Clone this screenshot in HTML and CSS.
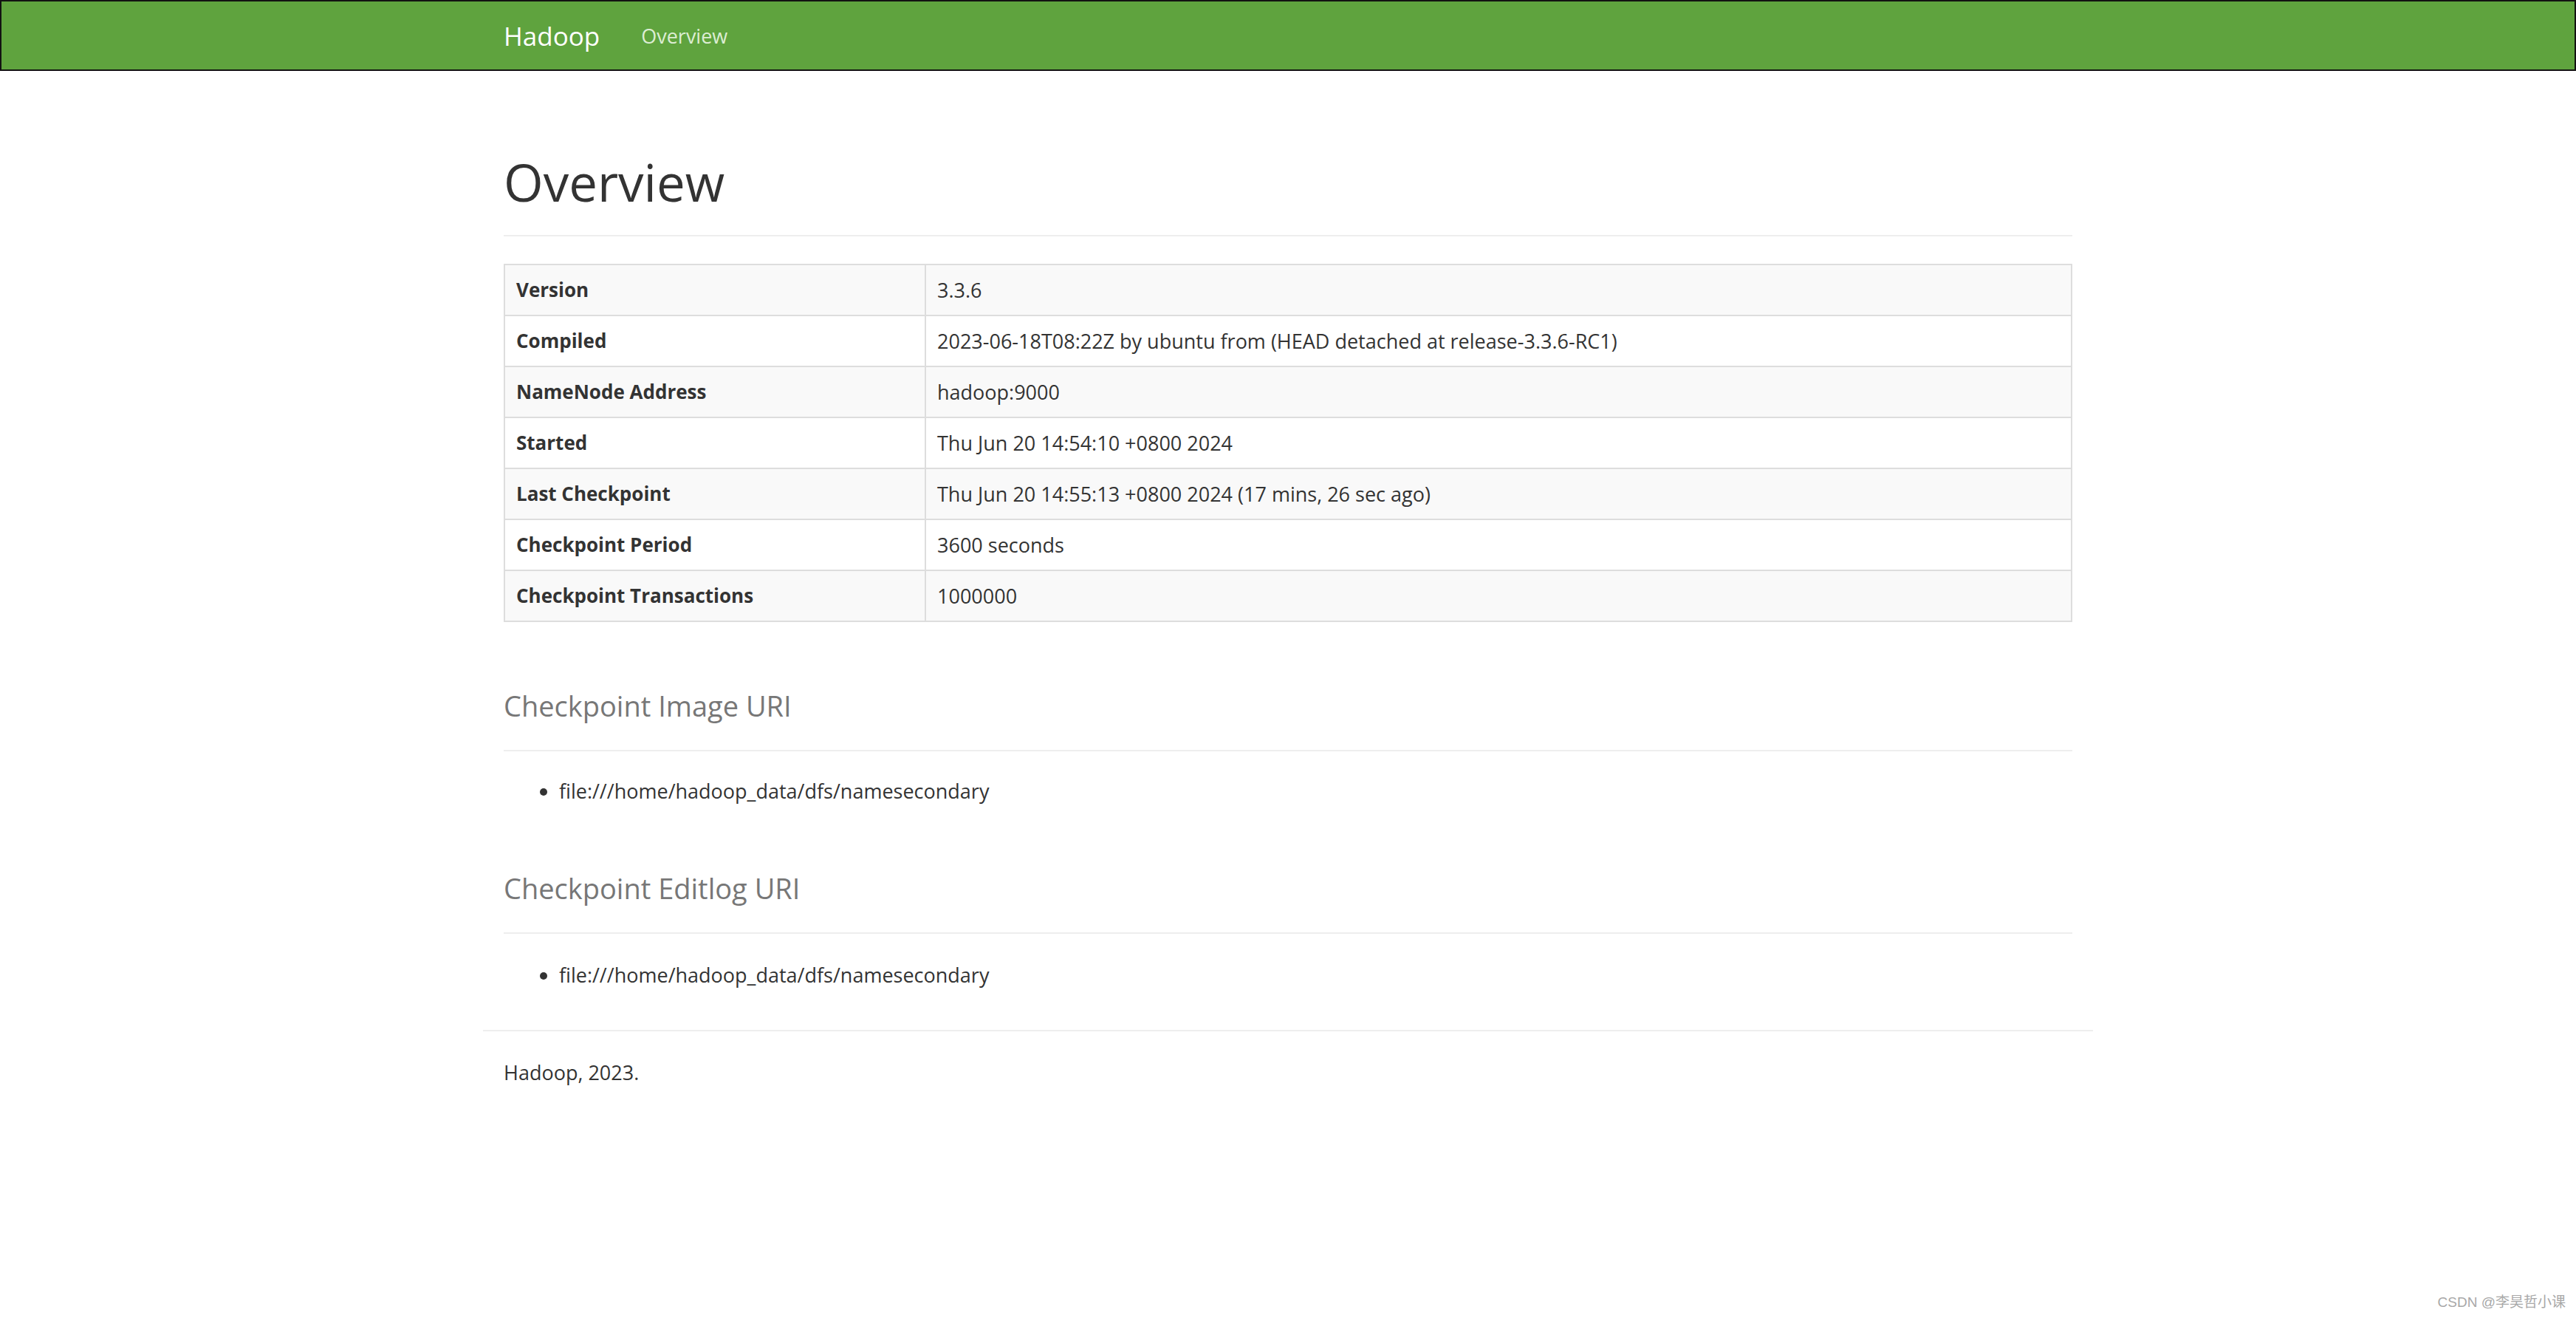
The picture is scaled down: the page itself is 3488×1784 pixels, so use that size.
FILE: index.html
```html
<!DOCTYPE html>
<html lang="en">
<head>
<meta charset="utf-8">
<title>Hadoop Secondary NameNode</title>
<link rel="stylesheet" href="styles.css">
</head>
<body>
<header class="navbar">
  <div class="navbar-inner">
    <a class="brand" href="#">Hadoop</a>
    <nav class="nav">
      <a class="nav-link" href="#">Overview</a>
    </nav>
  </div>
</header>

<main class="container">
  <div class="page-header first">
    <h1 class="page-title">Overview</h1>
  </div>

  <table class="info-table">
    <tbody>
      <tr><th>Version</th><td>3.3.6</td></tr>
      <tr><th>Compiled</th><td>2023-06-18T08:22Z by ubuntu from (HEAD detached at release-3.3.6-RC1)</td></tr>
      <tr><th>NameNode Address</th><td>hadoop:9000</td></tr>
      <tr><th>Started</th><td>Thu Jun 20 14:54:10 +0800 2024</td></tr>
      <tr><th>Last Checkpoint</th><td>Thu Jun 20 14:55:13 +0800 2024 (17 mins, 26 sec ago)</td></tr>
      <tr><th>Checkpoint Period</th><td>3600 seconds</td></tr>
      <tr><th>Checkpoint Transactions</th><td>1000000</td></tr>
    </tbody>
  </table>

  <div class="page-header section">
    <h1 class="page-title"><small class="sub">Checkpoint Image URI</small></h1>
  </div>
  <ul class="uri-list">
    <li>file:///home/hadoop_data/dfs/namesecondary</li>
  </ul>

  <div class="page-header section">
    <h1 class="page-title"><small class="sub">Checkpoint Editlog URI</small></h1>
  </div>
  <ul class="uri-list second">
    <li>file:///home/hadoop_data/dfs/namesecondary</li>
  </ul>

  <div class="footer-row">
    <hr class="footer-rule">
    <p class="footer-text">Hadoop, 2023.</p>
  </div>
</main>

<div class="watermark">CSDN @李昊哲小课</div>
</body>
</html>
```

FILE: styles.css
```css
* {
  box-sizing: border-box;
}

html, body {
  margin: 0;
  padding: 0;
}

body {
  font-family: "Open Sans", "Noto Sans", "Noto Sans CJK SC", sans-serif;
  font-size: 27px;
  line-height: 37px;
  color: #333;
  background: #fff;
  min-height: 1784px;
  position: relative;
}

a {
  text-decoration: none;
}

/* navbar */
.navbar {
  height: 96px;
  background: #5fa33e;
  border: 2px solid #121212;
}

.navbar-inner {
  width: 2180px;
  margin: 0 auto;
  padding: 0 28px;
  height: 100%;
  display: flex;
  align-items: center;
}

.brand {
  font-size: 35px;
  line-height: 37px;
  color: #fff;
  padding-right: 28px;
}

.nav {
  display: flex;
}

.nav-link {
  font-size: 27px;
  line-height: 37px;
  color: #dcedd3;
  padding-left: 28px;
}

/* container */
.container {
  width: 2180px;
  margin: 0 auto;
  padding: 0 28px;
}

.page-header {
  border-bottom: 2px solid #eee;
  padding-bottom: 34px;
}

.page-header.first {
  margin-top: 113px;
}

.page-header.section {
  margin-top: 64px;
  padding-bottom: 34px;
}

.page-title {
  margin: 0;
  font-size: 69px;
  line-height: 75px;
  font-weight: 400;
  color: #333;
}

.sub {
  font-size: 38px;
  line-height: 1;
  color: #777;
}

/* table */
.info-table {
  width: 100%;
  margin-top: 37px;
  border-collapse: collapse;
  border: 2px solid #ddd;
  table-layout: fixed;
}

.info-table th,
.info-table td {
  border: 2px solid #ddd;
  padding: 15px 15px;
  text-align: left;
  vertical-align: top;
  line-height: 37px;
}

.info-table th {
  width: 570px;
  font-size: 26px;
  font-weight: 700;
}

.info-table tr:nth-child(odd) {
  background: #f9f9f9;
}

/* lists */
.uri-list {
  margin: 35px 0 0;
  padding-left: 75px;
}

.uri-list.second {
  margin-top: 37px;
}

/* footer */
.footer-row {
  margin: 0 -28px;
  padding-top: 56px;
}

.footer-rule {
  margin: 0;
  border: 0;
  border-top: 2px solid #eee;
}

.footer-text {
  margin: 37px 0 0;
  padding: 0 28px;
}

.watermark {
  position: absolute;
  right: 14px;
  bottom: 10px;
  font-family: "Liberation Sans", "Noto Sans CJK SC", sans-serif;
  font-size: 19px;
  line-height: 22px;
  color: #a8a8a8;
}
```
